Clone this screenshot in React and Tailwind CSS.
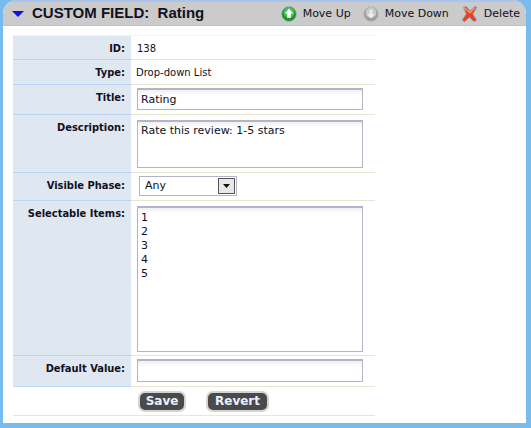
import React from "react";

const font = { fontFamily: '"DejaVu Sans", sans-serif' };
const labelFont = { fontFamily: '"DejaVu Sans Condensed", "DejaVu Sans", sans-serif' };

function Row({ label, h, children }) {
  return (
    <div className={`flex ${h} border-b border-[#e8e8d0]`}>
      <div
        style={labelFont}
        className="w-[118px] shrink-0 bg-[#dfe7f1] border-b border-[#bcd4f5] -mb-px pr-[6px] pt-[6px] text-right text-[11px] leading-[14px] font-bold text-[#111122]"
      >
        {label}
      </div>
      <div className="flex-1 min-w-0">{children}</div>
    </div>
  );
}

function TextBox({ className, children }) {
  return (
    <div
      className={`bg-gradient-to-b from-[#f0f0f0] to-white to-[6px] border border-[#b4b4c8] border-t-2 text-[11px] leading-[14px] text-[#111122] pl-[3px] ${className}`}
    >
      {children}
    </div>
  );
}

function ActionIcon({ kind }) {
  if (kind === "delete") {
    return (
      <svg width="17" height="18" viewBox="0 0 17 18" className="shrink-0">
        <path d="M2 2 L5 1 L9 5.5 L14 1 L16 2.5 L12 9 L16 15 L13 17 L8.5 12.5 L3.5 17 L1 15 L5 9 Z" fill="#e0481f" stroke="#9cb4e0" strokeWidth="0.8" />
        <path d="M3 2.5 L9 7.5 L14 2.5" fill="none" stroke="#fa9a78" strokeWidth="1.4" />
      </svg>
    );
  }
  const up = kind === "up";
  return (
    <svg width="16" height="16" viewBox="0 0 16 16" className="shrink-0">
      <circle cx="8" cy="8" r="7.4" fill={up ? "#1f8f2a" : "#9c9c9c"} stroke={up ? "#8fb8d8" : "#b8c0d8"} strokeWidth="0.8" />
      <circle cx="8" cy="6.5" r="5.4" fill={up ? "#4cc04c" : "#c8c8c8"} />
      {up ? (
        <path d="M8 2.6 L12.2 7.5 H9.8 V12 H6.2 V7.5 H3.8 Z" fill="#fff" />
      ) : (
        <path d="M8 12.4 L4.2 8 H6.5 V3.8 H9.5 V8 H11.8 Z" fill="#ececec" />
      )}
    </svg>
  );
}

function Action({ kind, label }) {
  return (
    <div className="flex items-center gap-[6px]">
      <ActionIcon kind={kind} />
      <span className="text-[11px] leading-[14px] text-[#111122]">{label}</span>
    </div>
  );
}

function DarkButton({ children, className }) {
  return (
    <button className={`h-[21px] rounded-[7px] bg-[#4a4a4a] border-2 border-[#d4d4d4] text-[12px] font-bold text-[#e8f0ff] leading-none ${className}`}>
      {children}
    </button>
  );
}

export default function App() {
  return (
    <div style={font} className="w-[531px] h-[428px] overflow-hidden bg-[#78bcee] pl-[3px] pr-[5px] pb-[5px]">
      <div className="h-full bg-white rounded-tl-[14px] rounded-tr-[14px] overflow-hidden flex flex-col">
        <div className="h-[26px] shrink-0 bg-[#cbcbcb] border-t-2 border-b border-[#a8c4f0] flex items-center pl-[9px] pr-[6px]">
          <svg width="12" height="6" viewBox="0 0 12 6" className="shrink-0">
            <path d="M0 0 H12 L6 6 Z" fill="#1010e0" />
          </svg>
          <span className="ml-[8px] text-[15px] font-bold text-[#111122] whitespace-pre" style={{ fontFamily: '"Liberation Sans", sans-serif' }}>
            CUSTOM FIELD:  Rating
          </span>
          <div className="ml-auto flex items-center gap-[12px]">
            <Action kind="up" label="Move Up" />
            <Action kind="down" label="Move Down" />
            <Action kind="delete" label="Delete" />
          </div>
        </div>

        <div className="w-[362px] ml-[10px] mt-[9px] border-t border-[#f4f4ec]">
          <Row label="ID:" h="h-[24px]">
            <div className="pl-[6px] pt-[6px] text-[10px] leading-[13px] text-[#111122]">138</div>
          </Row>
          <Row label="Type:" h="h-[25px]">
            <div className="pl-[5px] pt-[6px] text-[10px] leading-[13px] text-[#111122]">Drop-down List</div>
          </Row>
          <Row label="Title:" h="h-[30px]">
            <TextBox className="ml-[6px] mt-[3px] w-[226px] h-[22px] pt-[3px]">Rating</TextBox>
          </Row>
          <Row label="Description:" h="h-[58px]">
            <TextBox className="ml-[6px] mt-[5px] w-[226px] h-[48px] pt-[2px]">Rate this review: 1-5 stars</TextBox>
          </Row>
          <Row label="Visible Phase:" h="h-[28px]">
            <div className="ml-[8px] mt-[3px] w-[98px] h-[20px] border border-[#b4b4c8] flex items-center justify-between pr-[1px] pl-[5px]">
              <span className="text-[11px] text-[#111122]">Any</span>
              <div className="w-[17px] h-[16px] bg-[#e8e8e8] border border-[#555] flex items-center justify-center">
                <svg width="7" height="4" viewBox="0 0 7 4"><path d="M0 0 H7 L3.5 4 Z" fill="#111" /></svg>
              </div>
            </div>
          </Row>
          <Row label="Selectable Items:" h="h-[155px]">
            <TextBox className="ml-[6px] mt-[5px] w-[226px] h-[146px] pt-[3px]">
              <div>1</div>
              <div>2</div>
              <div>3</div>
              <div>4</div>
              <div>5</div>
            </TextBox>
          </Row>
          <Row label="Default Value:" h="h-[31px]">
            <TextBox className="ml-[6px] mt-[3px] w-[226px] h-[23px]" />
          </Row>
          <div className="h-[29px] border-b border-[#e8e8d0] flex items-center pl-[125px] gap-[20px]">
            <DarkButton className="w-[48px]">Save</DarkButton>
            <DarkButton className="w-[63px]">Revert</DarkButton>
          </div>
        </div>
      </div>
    </div>
  );
}
